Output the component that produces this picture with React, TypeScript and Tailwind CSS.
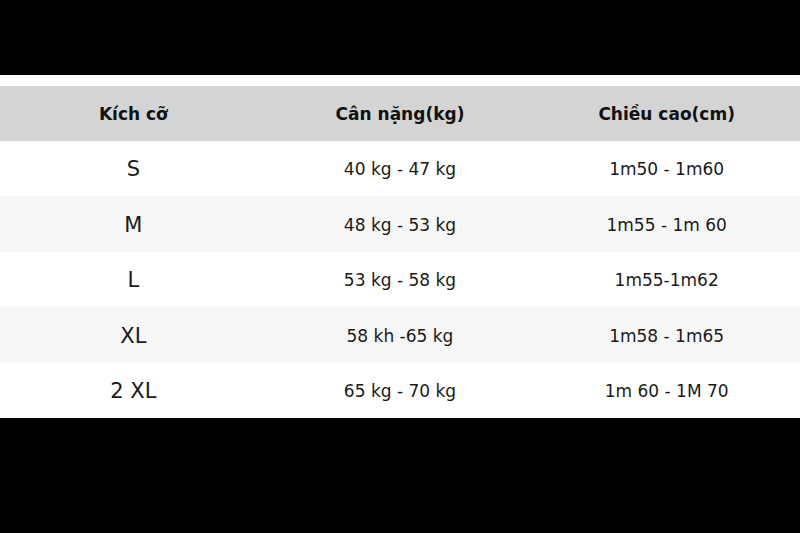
import React from "react";

const rows = [
  ["S", "40 kg - 47 kg", "1m50 - 1m60"],
  ["M", "48 kg - 53 kg", "1m55 - 1m 60"],
  ["L", "53 kg - 58 kg", "1m55-1m62"],
  ["XL", "58 kh -65 kg", "1m58 - 1m65"],
  ["2 XL", "65 kg - 70 kg", "1m 60 - 1M 70"],
];

export default function App() {
  return (
    <div className="w-[800px] h-[533px] bg-black flex flex-col" style={{ fontFamily: '"DejaVu Sans", sans-serif' }}>
      <div className="h-[75px] shrink-0" />
      <div className="bg-white pt-[11px]">
        <div className="grid grid-cols-3 h-[55px] pt-[2px] bg-[#d4d4d4] items-center text-[17px] font-bold text-[#111]">
          <div className="text-center">Kích cỡ</div>
          <div className="text-center">Cân nặng(kg)</div>
          <div className="text-center">Chiều cao(cm)</div>
        </div>
        {rows.map((r, i) => (
          <div
            key={i}
            className={`grid grid-cols-3 h-[55.4px] pt-[3px] items-center text-[#1a1a1a] ${i % 2 === 1 ? "bg-[#f7f7f7]" : "bg-white"}`}
          >
            <div className="text-center text-[21px]">{r[0]}</div>
            <div className="text-center text-[17px]">{r[1]}</div>
            <div className="text-center text-[17px]">{r[2]}</div>
          </div>
        ))}
      </div>
    </div>
  );
}
